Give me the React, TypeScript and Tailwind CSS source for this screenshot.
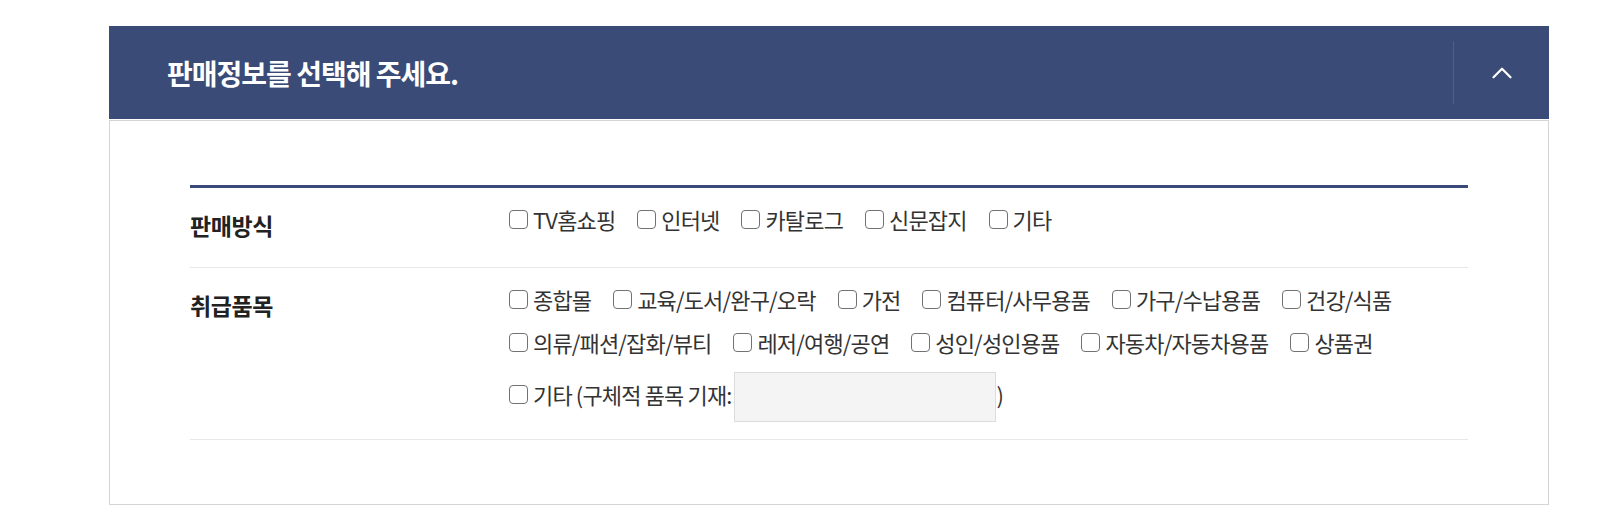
import { ChevronUp } from "lucide-react";

const saleMethods = ["TV홈쇼핑", "인터넷", "카탈로그", "신문잡지", "기타"];

const itemLines = [
  ["종합몰", "교육/도서/완구/오락", "가전", "컴퓨터/사무용품", "가구/수납용품", "건강/식품"],
  ["의류/패션/잡화/뷰티", "레저/여행/공연", "성인/성인용품", "자동차/자동차용품", "상품권"],
];

// native checkbox look, drawn as a box so the size is exact
const Box = () => (
  <span
    role="checkbox"
    aria-checked="false"
    className="block h-[19px] w-[19px] shrink-0 rounded-[4px] border-[1.5px] border-[#727272] bg-white"
  />
);

const Check = ({ label }: { label: string }) => {
  return (
    <label className="mr-[22px] flex h-[36px] items-center">
      <Box />
      <span className="ml-[5px] whitespace-nowrap text-[22px] leading-[30px] tracking-[-0.85px] text-[#333]">
        {label}
      </span>
    </label>
  );
};

export default function App() {
  return (
    <div
      className="min-h-[530px] bg-white pt-[26px] pl-[109px]"
      style={{ fontFamily: '"Noto Sans CJK KR", "Noto Sans", sans-serif' }}
    >
      <div className="w-[1440px]">
        <div className="flex h-[93px] items-center bg-[#394b76]">
          <h2 className="flex-1 pl-[58px] text-[28px] font-bold leading-none tracking-[-1px] text-white">
            판매정보를 선택해 주세요.
          </h2>
          <div className="h-[63px] w-px bg-[#4e5f8b]" />
          <button className="flex h-full w-[95px] items-center justify-center text-white">
            <ChevronUp className="h-[34px] w-[34px]" strokeWidth={1.6} />
          </button>
        </div>

        <div className="mt-px border border-[#d5d5d5] px-[80px] pt-[64px] pb-[64px]">
          <div className="border-t-[3px] border-[#3a4a78]">
            <div className="flex border-b border-[#e8e8e8] pt-[13px] pb-[30px]">
              <div className="w-[319px] shrink-0 pt-[12px] text-[23px] font-bold leading-[24px] tracking-[-0.4px] text-[#222]">
                판매방식
              </div>
              <div className="flex flex-wrap">
                {saleMethods.map((m) => (
                  <Check key={m} label={m} />
                ))}
              </div>
            </div>

            <div className="flex border-b border-[#e8e8e8] pt-[13px] pb-[17px]">
              <div className="w-[319px] shrink-0 pt-[12px] text-[23px] font-bold leading-[24px] tracking-[-0.4px] text-[#222]">
                취급품목
              </div>
              <div className="flex flex-col gap-[7px]">
                {itemLines.map((line, i) => (
                  <div key={i} className="flex">
                    {line.map((item) => (
                      <Check key={item} label={item} />
                    ))}
                  </div>
                ))}
                <div className="mt-[5px] flex h-[50px] items-center">
                  <div className="flex items-center pb-[6px]">
                    <Box />
                    <span className="ml-[5px] whitespace-nowrap text-[22px] leading-[30px] tracking-[-0.85px] text-[#333]">
                      기타 (구체적 품목 기재:
                    </span>
                  </div>
                  <input
                    type="text"
                    className="ml-[2px] h-[50px] w-[262px] border border-[#dcdcdc] bg-[#f4f4f4] outline-none"
                  />
                  <span className="ml-[1px] pb-[6px] text-[22px] leading-[30px] text-[#333]">)</span>
                </div>
              </div>
            </div>
          </div>
        </div>
      </div>
    </div>
  );
}
